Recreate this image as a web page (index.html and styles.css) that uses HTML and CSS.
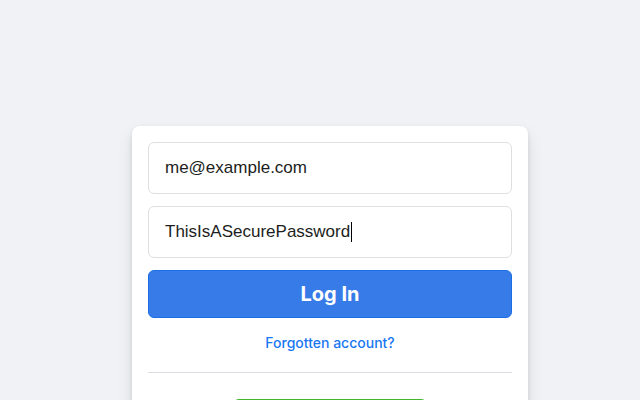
FILE: index.html
```html
<!DOCTYPE html>
<html>
<head>
<meta charset="utf-8">
<link rel="stylesheet" href="styles.css">
</head>
<body>
<div class="page">
  <div class="card">
    <div class="field">me@example.com</div>
    <div class="field">ThisIsASecurePassword<span class="caret"></span></div>
    <button class="login">Log In</button>
    <div class="forgot"><a href="#">Forgotten account?</a></div>
    <div class="divider"></div>
    <div class="create-wrap"><button class="create">Create new account</button></div>
  </div>
</div>
</body>
</html>
```
FILE: styles.css
```css
html, body {
  margin: 0;
  padding: 0;
  background: #f0f2f5;
  height: 100%;
  overflow: hidden;
}
.page {
  display: flex;
  justify-content: center;
  padding: 126px 0 0 20px;
}
.card {
  width: 396px;
  box-sizing: border-box;
  background: #fff;
  border-radius: 8px;
  box-shadow: 0 2px 4px rgba(0,0,0,.1), 0 8px 16px rgba(0,0,0,.1);
  padding: 16px 16px 24px;
  display: flex;
  flex-direction: column;
}
.field {
  height: 52px;
  box-sizing: border-box;
  border: 1px solid #dddfe2;
  border-radius: 6px;
  padding: 0 16px;
  display: flex;
  align-items: center;
  font-family: "Liberation Sans", Arial, sans-serif;
  font-size: 17px;
  color: #1c1e21;
  margin-bottom: 12px;
}
.caret {
  display: inline-block;
  width: 1px;
  height: 20px;
  background: #000;
  margin-left: 1px;
}
.login {
  height: 48px;
  border: 1px solid #1b6fe6;
  border-radius: 6px;
  background: #377be8;
  color: #fff;
  font-family: Inter, "Liberation Sans", sans-serif;
  font-weight: 700;
  font-size: 20px;
  padding: 0;
  cursor: pointer;
}
.forgot {
  margin-top: 16px;
  text-align: center;
  line-height: 18px;
}
.forgot a {
  color: #1877f2;
  font-family: Inter, "Liberation Sans", sans-serif;
  font-size: 14px;
  font-weight: 500;
  text-decoration: none;
}
.divider {
  border-bottom: 1px solid #dadde1;
  margin-top: 20px;
}
.create-wrap {
  display: flex;
  justify-content: center;
  padding-top: 26px;
}
.create {
  width: 194px;
  height: 48px;
  border: none;
  border-radius: 6px;
  background: #42b72a;
  color: #fff;
  font-family: Inter, "Liberation Sans", sans-serif;
  font-weight: 700;
  font-size: 17px;
}
```
